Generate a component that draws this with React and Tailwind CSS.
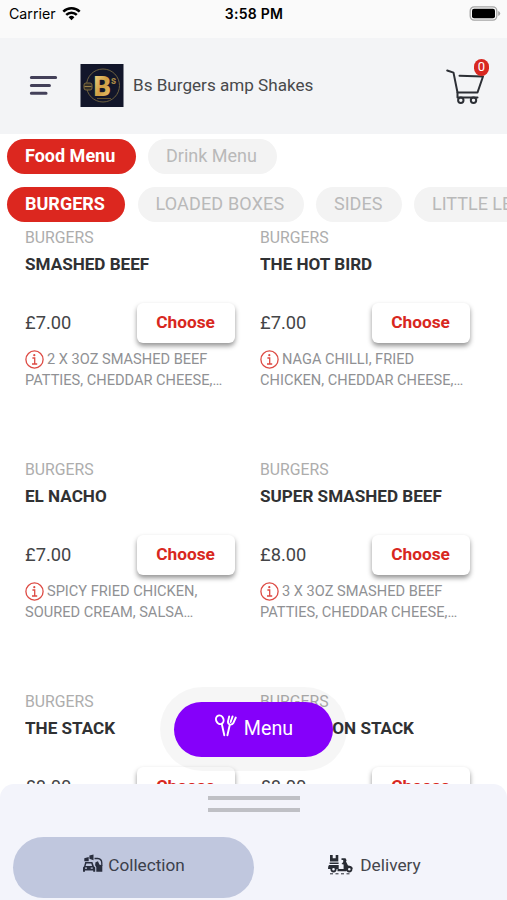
import React from "react";

const rows = [
  [
    { title: "SMASHED BEEF", price: "£7.00", lines: ["2 X 3OZ SMASHED BEEF", "PATTIES, CHEDDAR CHEESE,…"] },
    { title: "THE HOT BIRD", price: "£7.00", lines: ["NAGA CHILLI, FRIED", "CHICKEN, CHEDDAR CHEESE,…"] },
  ],
  [
    { title: "EL NACHO", price: "£7.00", lines: ["SPICY FRIED CHICKEN,", "SOURED CREAM, SALSA…"] },
    { title: "SUPER SMASHED BEEF", price: "£8.00", lines: ["3 X 3OZ SMASHED BEEF", "PATTIES, CHEDDAR CHEESE,…"] },
  ],
  [
    { title: "THE STACK", price: "£8.00", lines: [] },
    { title: "BUFFALOON STACK", price: "£8.00", lines: [], alignEnd: true },
  ],
];

function StatusBar() {
  return (
    <div className="flex h-[38px] shrink-0 bg-[#fafafa] text-black">
      <div className="flex h-[27px] w-[200px] items-center gap-[6px] pl-[9px] font-['Inter'] text-[14.2px]">
        <span>Carrier</span>
        <svg width="19" height="15" viewBox="0 0 19 15" fill="none" stroke="#000" strokeWidth="2.5">
          <path d="M1.3 5.6a11.8 11.8 0 0 1 16.4 0" />
          <path d="M4.2 8.9a7.6 7.6 0 0 1 10.6 0" />
          <path d="M9.5 14.2 6.6 11.3a4.1 4.1 0 0 1 5.8 0Z" fill="#000" stroke="none" />
        </svg>
      </div>
      <div className="flex h-[27px] w-[108px] items-center justify-center font-['Inter'] text-[14px] font-semibold tracking-[0.25px]">3:58 PM</div>
      <div className="flex h-[27px] flex-1 items-center justify-end pr-[6px]">
        <svg width="32" height="15" viewBox="0 0 32 15">
          <rect x="1.2" y="0.9" width="26.6" height="13.2" rx="4" fill="#fafafa" stroke="#a5a5a5" strokeWidth="1.3" />
          <rect x="3" y="2.7" width="23" height="9.6" rx="2" fill="#000" />
          <path d="M29.2 5v5q2-.8 2-2.5T29.2 5Z" fill="#a5a5a5" />
        </svg>
      </div>
    </div>
  );
}

function Logo() {
  return (
    <svg className="ml-[22px]" width="44" height="43" viewBox="0 0 44 43">
      <defs>
        <linearGradient id="gold" x1="0" y1="0" x2="1" y2="1">
          <stop offset="0" stopColor="#f5dc90" />
          <stop offset="0.5" stopColor="#cf9d42" />
          <stop offset="1" stopColor="#eccb76" />
        </linearGradient>
      </defs>
      <rect x="0.5" width="43" height="43" fill="#12162a" />
      <circle cx="23" cy="21.5" r="16.5" fill="none" stroke="#6e613f" strokeWidth="1" />
      <rect x="4" y="19" width="8" height="7" rx="2" fill="#332f28" stroke="#84703f" strokeWidth="0.9" />
      <path d="M4.5 22.5h7" stroke="#9b8248" strokeWidth="1" />
      <text x="13.5" y="31.5" fontFamily="Roboto" fontWeight="900" fontSize="27" fill="url(#gold)">B</text>
      <text x="31" y="20" fontFamily="Roboto" fontWeight="700" fontSize="10" fill="#a78743">s</text>
      <path d="M17 34.5h14" stroke="#74602f" strokeWidth="0.8" />
    </svg>
  );
}

function Header() {
  return (
    <header className="flex h-[96px] shrink-0 items-center bg-[#f3f4f6] pb-px pl-[29px] pr-[17px]">
      <svg width="29" height="21" viewBox="0 0 29 21" stroke="#434059" strokeWidth="3.1" strokeLinecap="round">
        <path d="M2.4 2.5h24.2M2.4 10.5h18M2.4 18.2h14.6" />
      </svg>
      <Logo />
      <h1 className="ml-[9px] flex-1 whitespace-nowrap text-[17.1px] text-[#48494b]">Bs Burgers amp Shakes</h1>
      <div className="relative h-[54px] w-[44px]">
        <svg className="mt-[10px]" width="40" height="36" viewBox="0 0 40 36" fill="none" stroke="#2c2f35" strokeWidth="2" strokeLinecap="round" strokeLinejoin="round">
          <path d="M1.2 1.5 7.5 3.6 11.5 23.5H31.5L37 7.5 13.5 6.7" />
          <path d="M11.5 23.5V28.6H31.5" />
          <circle cx="14.8" cy="31.3" r="2.7" />
          <circle cx="27.5" cy="31.3" r="2.7" />
        </svg>
        <span className="absolute left-[28px] top-0 flex h-[17px] w-[15px] items-center justify-center rounded-full bg-[#d82720] text-[13px] text-white">0</span>
      </div>
    </header>
  );
}

function Pill({ active, className, children }) {
  return (
    <div
      className={`flex h-[35px] shrink-0 items-center whitespace-nowrap rounded-full pl-[18px] text-[18px] leading-none ${
        active ? "bg-[#dc271f] font-bold text-white" : "bg-[#f3f3f3] text-[#b9b9b9]"
      } ${className}`}
    >
      <span className="-mt-px">{children}</span>
    </div>
  );
}

function InfoIcon() {
  return (
    <svg className="mr-[3px] inline-block align-[-5px]" width="19" height="19" viewBox="0 0 19 19" fill="none" stroke="#dd4a43">
      <circle cx="9.5" cy="9.5" r="8.6" strokeWidth="1.3" />
      <path d="M7.4 8h2.3v5.8M7 14h5.2" strokeWidth="1.3" />
      <circle cx="9.3" cy="5.2" r="1.1" fill="#dd4a43" stroke="none" />
    </svg>
  );
}

function Item({ item }) {
  return (
    <article className="h-[232px] w-[210px]">
      <p className="h-[25px] text-[15.8px] leading-[25px] text-[#adadad]">BURGERS</p>
      <h2
        className={`h-[28px] overflow-hidden whitespace-nowrap text-[17.1px] font-bold leading-[28px] text-[#303133] ${
          item.alignEnd ? "w-[154px] text-right" : ""
        }`}
      >
        {item.title}
      </h2>
      <div className="mt-[25px] flex h-[40px] items-center justify-between">
        <span className="-mt-px text-[18.3px] text-[#444547]">{item.price}</span>
        <button className="h-[40px] w-[98px] rounded-[6px] bg-white pr-px text-[17.3px] font-bold text-[#d82720] shadow-[0_3px_5px_rgba(0,0,0,0.42)]">
          Choose
        </button>
      </div>
      {item.lines.length > 0 && (
        <p className="mt-[6px] whitespace-nowrap text-[14.6px] leading-[21px] text-[#909194]">
          <span className="block h-[21px]">
            <InfoIcon />
            {item.lines[0]}
          </span>
          <span className="block h-[21px]">{item.lines[1]}</span>
        </p>
      )}
    </article>
  );
}

function CutleryIcon() {
  return (
    <svg width="24" height="23" viewBox="0 0 24 23" fill="none" stroke="#fff" strokeWidth="1.9" strokeLinecap="round" strokeLinejoin="round">
      <ellipse cx="5.8" cy="5.7" rx="3.7" ry="4.4" transform="rotate(-22 5.8 5.7)" />
      <path d="M7.8 10 10.3 21.2" />
      <path d="M15.2 2.4 14 7.4q-.2 2.6 1.8 3.1 2.4.5 3.5-1.5L21.8 3.5M18.6 2.4 16.6 8M15.8 10.7 13.4 21.2" />
    </svg>
  );
}

function CollectionIcon() {
  return (
    <svg width="21" height="20" viewBox="0 0 21 20" fill="#292e3e">
      <path d="M2.3 4.2 6.7 3v4.3H2.3ZM7.4 1.5 11.5.5v5.8L7.4 4.8Z" />
      <path fillRule="evenodd" d="M3.2 8h7.2l1.5 4.2 1.3 1.2v4.4h-2V16.5H3v1.3H1v-4.4l1.1-1.2ZM4.4 9.4 3.6 12h6.5L9.3 9.4ZM3 13.4v1.4h2v-1.4Zm5.7 0v1.4h2.1v-1.4Z" />
      <path d="M12.5 4.5h3.2q4.1.4 4.1 4.5V12" fill="none" stroke="#292e3e" strokeWidth="1.3" />
      <path d="M13.5 8.2 16 7.2l1.3 3.3 3 1v6.3h-6v-4.6l-1.2-2Z" />
    </svg>
  );
}

function DeliveryIcon() {
  return (
    <svg width="25" height="21" viewBox="0 0 25 21" fill="#292c34">
      <path d="M2 1h2.7v3.2h3V1h2.6v6.4H2Z" />
      <path d="M1.6 8.5h9v1.5h-9ZM1 11h9.7v3.9H0q0-2.8 1-3.9Z" />
      <path d="M13.5 4.2h4l1.1 2-.6 1.2 2 4q3.6.1 4.8 2.8l-1 1.1h-3.6l-2 2H9.5v-2.4h6.1v-4.3l-2.1-.7 1.7-2v-2h-1.7Z" />
      <circle cx="5.5" cy="15.3" r="2.2" fill="#f3f4fb" stroke="#292c34" strokeWidth="1.8" />
      <circle cx="21.3" cy="15.3" r="2.2" fill="#f3f4fb" stroke="#292c34" strokeWidth="1.8" />
      <path d="M2 19.8h3M7.5 19.8h3M13 19.8h3M18.5 19.8h3" stroke="#292c34" strokeWidth="1" />
    </svg>
  );
}

export default function App() {
  return (
    <div className="relative flex h-[900px] w-[507px] flex-col overflow-hidden bg-white font-['Roboto',sans-serif]">
      <StatusBar />
      <Header />
      <nav className="h-[88px] shrink-0 overflow-hidden pl-[7px] pt-[5px]">
        <div className="flex gap-3">
          <Pill active className="w-[129px]">Food Menu</Pill>
          <Pill className="w-[129px]">Drink Menu</Pill>
        </div>
        <div className="mt-[13px] flex gap-[12.5px]">
          <Pill active className="w-[118px]">BURGERS</Pill>
          <Pill className="w-[166px] tracking-[0.15px]">LOADED BOXES</Pill>
          <Pill className="w-[85.5px]">SIDES</Pill>
          <Pill className="w-[170px]">LITTLE LEGENDS</Pill>
        </div>
      </nav>
      <main className="h-[563px] shrink-0 overflow-hidden pl-[25px] pt-[3px]">
        {rows.map((row, i) => (
          <div key={i} className="flex gap-[25px]">
            {row.map((item) => (
              <Item key={item.title} item={item} />
            ))}
          </div>
        ))}
      </main>
      <footer className="-mt-px flex h-[116px] shrink-0 flex-col rounded-t-[14px] bg-[#f3f4fb]">
        <div className="mx-auto flex h-[53px] flex-col gap-[8px] pt-[12px]">
          <div className="h-[4px] w-[92px] bg-[#bfc0c5]" />
          <div className="h-[4px] w-[92px] bg-[#bfc0c5]" />
        </div>
        <div className="flex h-[61px] pl-[13px]">
          <button className="flex w-[241px] items-center justify-center gap-[5px] rounded-full bg-[#c0c7de] pb-[3px] text-[17.2px] text-[#3b3f4b]">
            <span className="-mt-1"><CollectionIcon /></span>
            Collection
          </button>
          <button className="flex w-[241px] items-center justify-center gap-[7px] pb-[3px] text-[17.3px] text-[#45464c]">
            <span className="-mt-1"><DeliveryIcon /></span>
            Delivery
          </button>
        </div>
      </footer>
      <div className="absolute left-[160px] top-[687px] flex h-[84px] w-[187px] items-center justify-center rounded-full bg-black/[0.035]">
        <button className="flex h-[55px] w-[159px] items-center justify-center gap-[6px] rounded-full bg-[#8500fa] text-[19.7px] text-white">
          <span className="-mt-2"><CutleryIcon /></span>
          Menu
        </button>
      </div>
    </div>
  );
}
